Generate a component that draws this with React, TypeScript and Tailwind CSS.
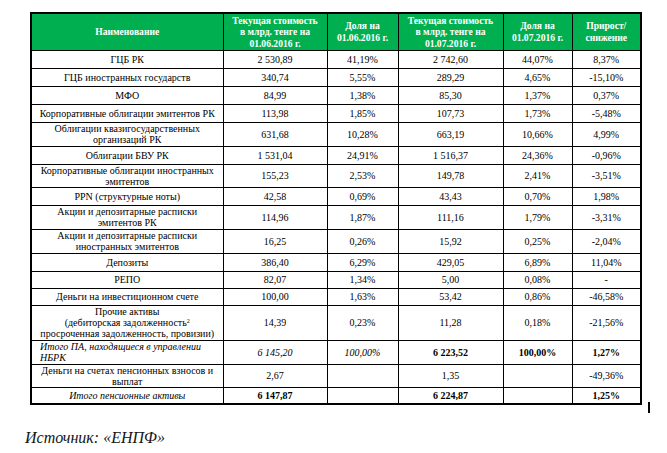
import { ReactNode } from "react";

type Row = {
  name: ReactNode;
  cells: ReactNode[];
  h: string;
};

const ROWS: Row[] = [
  { name: "ГЦБ РК", cells: ["2 530,89", "41,19%", "2 742,60", "44,07%", "8,37%"], h: "h-[18px]" },
  { name: "ГЦБ иностранных государств", cells: ["340,74", "5,55%", "289,29", "4,65%", "-15,10%"], h: "h-[18px]" },
  { name: "МФО", cells: ["84,99", "1,38%", "85,30", "1,37%", "0,37%"], h: "h-[18px]" },
  { name: "Корпоративные облигации эмитентов РК", cells: ["113,98", "1,85%", "107,73", "1,73%", "-5,48%"], h: "h-[18px]" },
  {
    name: <>Облигации квазигосударственных<br />организаций РК</>,
    cells: ["631,68", "10,28%", "663,19", "10,66%", "4,99%"],
    h: "h-[24px]",
  },
  { name: "Облигации БВУ РК", cells: ["1 531,04", "24,91%", "1 516,37", "24,36%", "-0,96%"], h: "h-[18px]" },
  {
    name: <>Корпоративные облигации иностранных<br />эмитентов</>,
    cells: ["155,23", "2,53%", "149,78", "2,41%", "-3,51%"],
    h: "h-[23px]",
  },
  { name: "PPN (структурные ноты)", cells: ["42,58", "0,69%", "43,43", "0,70%", "1,98%"], h: "h-[18px]" },
  {
    name: <>Акции и депозитарные расписки<br />эмитентов РК</>,
    cells: ["114,96", "1,87%", "111,16", "1,79%", "-3,31%"],
    h: "h-[24px]",
  },
  {
    name: <>Акции и депозитарные расписки<br />иностранных эмитентов</>,
    cells: ["16,25", "0,26%", "15,92", "0,25%", "-2,04%"],
    h: "h-[24px]",
  },
  { name: "Депозиты", cells: ["386,40", "6,29%", "429,05", "6,89%", "11,04%"], h: "h-[18px]" },
  { name: "РЕПО", cells: ["82,07", "1,34%", "5,00", "0,08%", "-"], h: "h-[17px]" },
  { name: "Деньги на инвестиционном счете", cells: ["100,00", "1,63%", "53,42", "0,86%", "-46,58%"], h: "h-[17px]" },
  {
    name: (
      <>
        Прочие активы
        <br />
        (дебиторская задолженность<sup className="text-[6px]">2</sup>
        <br />
        просроченная задолженность, провизии)
      </>
    ),
    cells: ["14,39", "0,23%", "11,28", "0,18%", "-21,56%"],
    h: "h-[35px]",
  },
  {
    name: (
      <span className="block pl-[6px] text-left italic">
        Итого ПА, находящиеся в управлении
        <br />
        НБРК
      </span>
    ),
    cells: [
      <span className="italic">6 145,20</span>,
      <span className="italic">100,00%</span>,
      <span className="font-bold">6 223,52</span>,
      <span className="font-bold">100,00%</span>,
      <span className="font-bold">1,27%</span>,
    ],
    h: "h-[24px]",
  },
  {
    name: <>Деньги на счетах пенсионных взносов и<br />выплат</>,
    cells: ["2,67", "", "1,35", "", "-49,36%"],
    h: "h-[23px]",
  },
  {
    name: <span className="italic">Итого пенсионные активы</span>,
    cells: [
      <span className="font-bold">6 147,87</span>,
      "",
      <span className="font-bold">6 224,87</span>,
      "",
      <span className="font-bold">1,25%</span>,
    ],
    h: "h-[17px]",
  },
];

const HEADERS: ReactNode[] = [
  "Наименование",
  <>Текущая стоимость<br />в млрд. тенге на<br />01.06.2016 г.</>,
  <>Доля на<br />01.06.2016 г.</>,
  <>Текущая стоимость<br />в млрд. тенге на<br />01.07.2016 г.</>,
  <>Доля на<br />01.07.2016 г.</>,
  <>Прирост/<br />снижение</>,
];

const WIDTHS = ["w-[192px]", "w-[104px]", "w-[71px]", "w-[105px]", "w-[69px]", "w-[69px]"];

export default function App() {
  return (
    <div className="h-[453px] w-[667px] bg-white pl-[30px] pt-[12px] text-black [font-family:Liberation_Serif,serif]">
      <div className="flex items-end">
        <table className="w-[610px] table-fixed border-collapse border-2 border-black text-[10px] leading-[11px]">
          <colgroup>
            {WIDTHS.map((w, i) => (
              <col key={i} className={w} />
            ))}
          </colgroup>
          <thead>
            <tr className="h-[37px] bg-[#00b050]">
              {HEADERS.map((h, i) => (
                <th
                  key={i}
                  className="border border-black px-0.5 text-center align-middle text-[9.6px] font-bold leading-[11.5px] text-white"
                >
                  {h}
                </th>
              ))}
            </tr>
          </thead>
          <tbody>
            {ROWS.map((r, i) => (
              <tr key={i} className={r.h}>
                <td className="border border-black px-0.5 text-center align-middle whitespace-nowrap">{r.name}</td>
                {r.cells.map((c, j) => (
                  <td key={j} className="border border-black px-0.5 text-center align-middle">
                    {c}
                  </td>
                ))}
              </tr>
            ))}
          </tbody>
        </table>
        <div className="mb-[-8px] ml-[6px] h-[11px] w-[2px] bg-black" />
      </div>
      <p className="-ml-[5px] mt-[24px] text-[16px] leading-[18px] italic text-[#141414]">
        Источник: «ЕНПФ»
      </p>
    </div>
  );
}
